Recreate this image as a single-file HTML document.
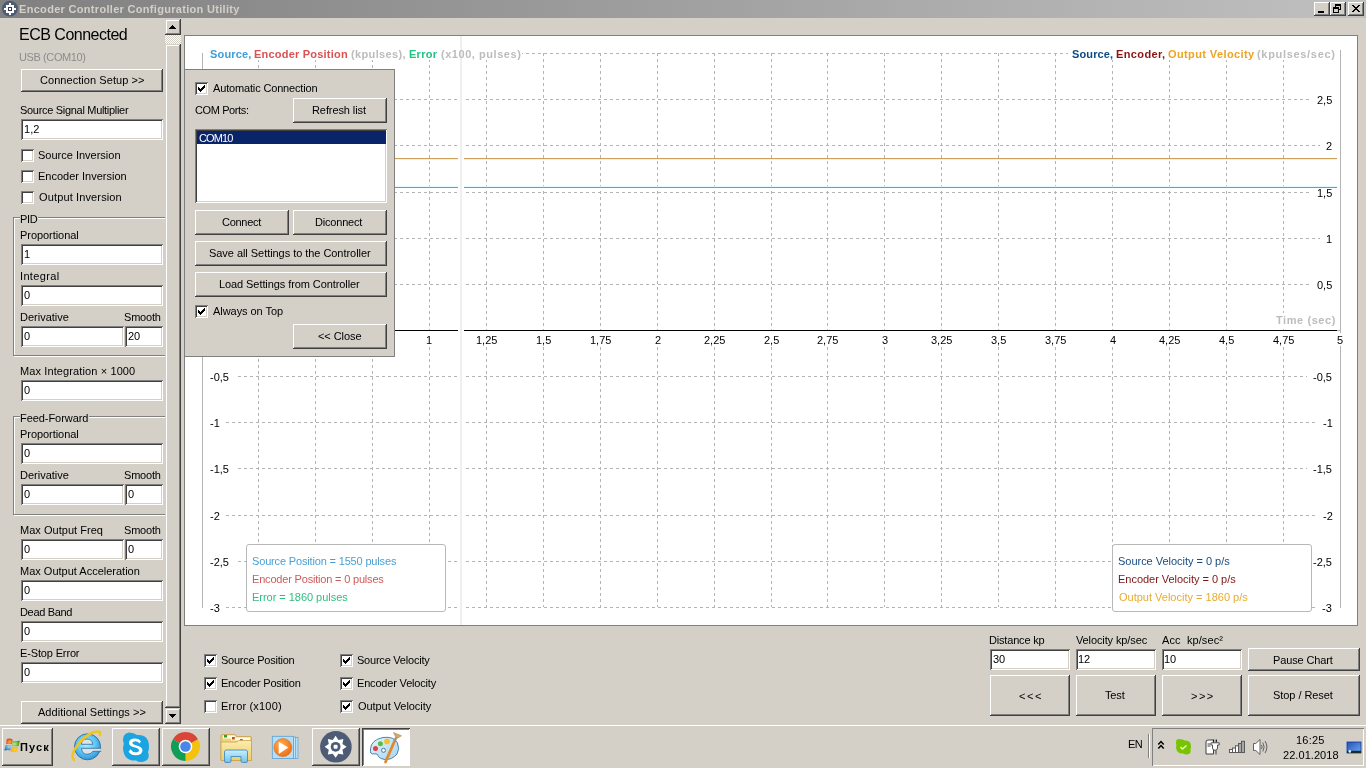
<!DOCTYPE html><html><head><meta charset="utf-8"><style>
html,body{margin:0;padding:0;}
body{width:1366px;height:768px;overflow:hidden;position:relative;background:#d4d0c8;font-family:'Liberation Sans', sans-serif;}
.t{position:absolute;white-space:pre;will-change:transform;}
.r{position:absolute;}
.btn{position:absolute;box-sizing:border-box;background:#d4d0c8;box-shadow:inset -1px -1px #404040, inset 1px 1px #fff, inset -2px -2px #808080;}
.sbtn{position:absolute;box-sizing:border-box;background:#d4d0c8;box-shadow:inset -1px -1px #404040, inset 1px 1px #d4d0c8, inset -2px -2px #808080, inset 2px 2px #fff;}
.tb{position:absolute;box-sizing:border-box;background:#fff;box-shadow:inset 1px 1px #808080, inset -1px -1px #fff, inset 2px 2px #404040, inset -2px -2px #d4d0c8;}
.cb{position:absolute;box-sizing:border-box;width:13px;height:13px;background:#fff;box-shadow:inset 1px 1px #808080, inset -1px -1px #fff, inset 2px 2px #404040, inset -2px -2px #d4d0c8;}
</style></head><body>
<div class="r" style="left:0;top:0;width:1366px;height:18px;background:linear-gradient(to right,#808080,#c0c0c0)"></div>
<svg class="t" style="left:0;top:0" width="19" height="18"><circle cx="9.9" cy="8.7" r="7.9" fill="#4d5b75"/><g shape-rendering="crispEdges" fill="#fff"><rect x="6" y="5" width="8" height="8"/><rect x="9" y="3" width="2" height="2"/><rect x="9" y="13" width="2" height="2"/><rect x="4" y="8" width="2" height="2"/><rect x="14" y="8" width="2" height="2"/></g><g shape-rendering="crispEdges"><rect x="8" y="7" width="4" height="4" fill="#333a48"/><rect x="9" y="8" width="2" height="2" fill="#fff"/></g></svg>
<div class="t" style="left:19.00px;top:3px;font-size:11px;line-height:13px;color:#d4d0c8;font-weight:bold;letter-spacing:0.308px;">Encoder Controller Configuration Utility</div>
<div class="btn" style="left:1314px;top:2px;width:16px;height:14px"></div>
<div class="btn" style="left:1330px;top:2px;width:16px;height:14px"></div>
<div class="btn" style="left:1348px;top:2px;width:16px;height:14px"></div>
<div class="r" style="left:1318px;top:11px;width:6px;height:2px;background:#000"></div>
<svg class="t" style="left:1330px;top:2px" width="16" height="14" shape-rendering="crispEdges"><path d="M5 2h6v2h-6zM10 4h1v4h-1zM9 7h1v1h-1zM5 4h1v1h-1zM3 5h6v2h-6zM3 7h1v4h-1zM8 7h1v4h-1zM3 10h6v1h-6z" fill="#000"/></svg>
<svg class="t" style="left:1348px;top:2px" width="16" height="14" shape-rendering="crispEdges"><path d="M4 3h2v1h1v1h2v-1h1v-1h2v1h-1v1h-1v1h-1v1h1v1h1v1h1v1h-2v-1h-1v-1h-2v1h-1v1h-2v-1h1v-1h1v-1h1v-1h-1v-1h-1v-1h-1z" fill="#000"/></svg>
<div class="t" style="left:19.00px;top:25px;font-size:16px;line-height:19px;color:#000;letter-spacing:-0.500px;">ECB Connected</div>
<div class="t" style="left:19.00px;top:51px;font-size:11px;line-height:13px;color:#8c8c8c;letter-spacing:-0.400px;">USB (COM10)</div>
<div class="btn" style="left:21px;top:69px;width:142px;height:23px"></div>
<div class="t" style="left:39.50px;top:74px;font-size:11px;line-height:13px;color:#000;letter-spacing:0.056px;">Connection Setup &gt;&gt;</div>
<div class="t" style="left:20.00px;top:104px;font-size:11px;line-height:13px;color:#000;letter-spacing:-0.304px;">Source Signal Multiplier</div>
<div class="tb" style="left:21px;top:119px;width:142px;height:21px"></div>
<div class="t" style="left:23.90px;top:123px;font-size:11px;line-height:13px;color:#000;letter-spacing:0.050px;">1,2</div>
<div class="cb" style="left:21px;top:149px"></div>
<div class="t" style="left:37.50px;top:149px;font-size:11px;line-height:13px;color:#000;">Source Inversion</div>
<div class="cb" style="left:21px;top:170px"></div>
<div class="t" style="left:37.50px;top:170px;font-size:11px;line-height:13px;color:#000;">Encoder Inversion</div>
<div class="cb" style="left:21px;top:191px"></div>
<div class="t" style="left:38.50px;top:191px;font-size:11px;line-height:13px;color:#000;letter-spacing:0.133px;">Output Inversion</div>
<div class="r" style="left:13px;top:217px;width:160px;height:139px;box-sizing:border-box;border:1px solid #808080;box-shadow:inset 1px 1px #fff, 1px 1px #fff"></div>
<div class="r" style="left:20px;top:217px;width:18px;height:2px;background:#d4d0c8"></div>
<div class="t" style="left:19.80px;top:213px;font-size:11px;line-height:13px;color:#000;letter-spacing:-0.350px;">PID</div>
<div class="t" style="left:20.00px;top:229px;font-size:11px;line-height:13px;color:#000;letter-spacing:-0.055px;">Proportional</div>
<div class="tb" style="left:21px;top:244px;width:142px;height:21px"></div>
<div class="t" style="left:23.50px;top:248px;font-size:11px;line-height:13px;color:#000;">1</div>
<div class="t" style="left:20.00px;top:270px;font-size:11px;line-height:13px;color:#000;letter-spacing:0.343px;">Integral</div>
<div class="tb" style="left:21px;top:285px;width:142px;height:21px"></div>
<div class="t" style="left:24.00px;top:289px;font-size:11px;line-height:13px;color:#000;">0</div>
<div class="t" style="left:20.00px;top:311px;font-size:11px;line-height:13px;color:#000;">Derivative</div>
<div class="t" style="left:124.00px;top:311px;font-size:11px;line-height:13px;color:#000;letter-spacing:-0.200px;">Smooth</div>
<div class="tb" style="left:21px;top:326px;width:103px;height:21px"></div>
<div class="t" style="left:24.00px;top:330px;font-size:11px;line-height:13px;color:#000;">0</div>
<div class="tb" style="left:125px;top:326px;width:38px;height:21px"></div>
<div class="t" style="left:128.00px;top:330px;font-size:11px;line-height:13px;color:#000;">20</div>
<div class="t" style="left:20.00px;top:365px;font-size:11px;line-height:13px;color:#000;letter-spacing:0.114px;">Max Integration × 1000</div>
<div class="tb" style="left:21px;top:380px;width:142px;height:21px"></div>
<div class="t" style="left:24.00px;top:384px;font-size:11px;line-height:13px;color:#000;">0</div>
<div class="r" style="left:13px;top:416px;width:160px;height:99px;box-sizing:border-box;border:1px solid #808080;box-shadow:inset 1px 1px #fff, 1px 1px #fff"></div>
<div class="r" style="left:20px;top:416px;width:69px;height:2px;background:#d4d0c8"></div>
<div class="t" style="left:20.00px;top:412px;font-size:11px;line-height:13px;color:#000;letter-spacing:-0.055px;">Feed-Forward</div>
<div class="t" style="left:20.00px;top:428px;font-size:11px;line-height:13px;color:#000;letter-spacing:-0.055px;">Proportional</div>
<div class="tb" style="left:21px;top:443px;width:142px;height:21px"></div>
<div class="t" style="left:24.00px;top:447px;font-size:11px;line-height:13px;color:#000;">0</div>
<div class="t" style="left:20.00px;top:469px;font-size:11px;line-height:13px;color:#000;">Derivative</div>
<div class="t" style="left:124.00px;top:469px;font-size:11px;line-height:13px;color:#000;letter-spacing:-0.200px;">Smooth</div>
<div class="tb" style="left:21px;top:484px;width:103px;height:21px"></div>
<div class="t" style="left:24.00px;top:488px;font-size:11px;line-height:13px;color:#000;">0</div>
<div class="tb" style="left:125px;top:484px;width:38px;height:21px"></div>
<div class="t" style="left:128.00px;top:488px;font-size:11px;line-height:13px;color:#000;">0</div>
<div class="t" style="left:20.00px;top:524px;font-size:11px;line-height:13px;color:#000;letter-spacing:0.029px;">Max Output Freq</div>
<div class="t" style="left:124.00px;top:524px;font-size:11px;line-height:13px;color:#000;letter-spacing:-0.200px;">Smooth</div>
<div class="tb" style="left:21px;top:539px;width:103px;height:21px"></div>
<div class="t" style="left:24.00px;top:543px;font-size:11px;line-height:13px;color:#000;">0</div>
<div class="tb" style="left:125px;top:539px;width:38px;height:21px"></div>
<div class="t" style="left:128.00px;top:543px;font-size:11px;line-height:13px;color:#000;">0</div>
<div class="t" style="left:20.00px;top:565px;font-size:11px;line-height:13px;color:#000;">Max Output Acceleration</div>
<div class="tb" style="left:21px;top:580px;width:142px;height:21px"></div>
<div class="t" style="left:24.00px;top:584px;font-size:11px;line-height:13px;color:#000;">0</div>
<div class="t" style="left:20.00px;top:606px;font-size:11px;line-height:13px;color:#000;letter-spacing:-0.325px;">Dead Band</div>
<div class="tb" style="left:21px;top:621px;width:142px;height:21px"></div>
<div class="t" style="left:24.00px;top:625px;font-size:11px;line-height:13px;color:#000;">0</div>
<div class="t" style="left:20.00px;top:647px;font-size:11px;line-height:13px;color:#000;letter-spacing:-0.145px;">E-Stop Error</div>
<div class="tb" style="left:21px;top:662px;width:142px;height:21px"></div>
<div class="t" style="left:24.00px;top:666px;font-size:11px;line-height:13px;color:#000;">0</div>
<div class="btn" style="left:21px;top:701px;width:142px;height:23px"></div>
<div class="t" style="left:37.50px;top:706px;font-size:11px;line-height:13px;color:#000;letter-spacing:0.038px;">Additional Settings &gt;&gt;</div>
<div class="r" style="left:165px;top:19px;width:16px;height:705px;background:repeating-conic-gradient(#fff 0 25%, #d4d0c8 0 50%) 0 0/2px 2px"></div>
<div class="sbtn" style="left:165px;top:19px;width:16px;height:16px"></div>
<svg class="t" style="left:165px;top:19px" width="16" height="16" shape-rendering="crispEdges"><path d="M7 6h1v1h1v1h1v1h1v1h-7v-1h1v-1h1v-1h1z" fill="#000"/></svg>
<div class="sbtn" style="left:165px;top:44px;width:16px;height:664px"></div>
<div class="sbtn" style="left:165px;top:708px;width:16px;height:16px"></div>
<svg class="t" style="left:165px;top:708px" width="16" height="16" shape-rendering="crispEdges"><path d="M4 6h7v1h-1v1h-1v1h-1v1h-1v-1h-1v-1h-1v-1h-1z" fill="#000"/></svg>
<div class="r" style="left:184px;top:35px;width:1174px;height:591px;box-sizing:border-box;border:1px solid #808080;background:#fff"></div>
<svg class="t" style="left:0;top:0" width="1366" height="768" shape-rendering="crispEdges"><line x1="258.5" y1="53" x2="258.5" y2="607" stroke="#b4b4b4" stroke-dasharray="3 3"/><line x1="315.5" y1="53" x2="315.5" y2="607" stroke="#b4b4b4" stroke-dasharray="3 3"/><line x1="372.5" y1="53" x2="372.5" y2="607" stroke="#b4b4b4" stroke-dasharray="3 3"/><line x1="429.5" y1="53" x2="429.5" y2="607" stroke="#b4b4b4" stroke-dasharray="3 3"/><line x1="486.5" y1="53" x2="486.5" y2="607" stroke="#b4b4b4" stroke-dasharray="3 3"/><line x1="543.5" y1="53" x2="543.5" y2="607" stroke="#b4b4b4" stroke-dasharray="3 3"/><line x1="600.5" y1="53" x2="600.5" y2="607" stroke="#b4b4b4" stroke-dasharray="3 3"/><line x1="657.5" y1="53" x2="657.5" y2="607" stroke="#b4b4b4" stroke-dasharray="3 3"/><line x1="714.5" y1="53" x2="714.5" y2="607" stroke="#b4b4b4" stroke-dasharray="3 3"/><line x1="771.5" y1="53" x2="771.5" y2="607" stroke="#b4b4b4" stroke-dasharray="3 3"/><line x1="827.5" y1="53" x2="827.5" y2="607" stroke="#b4b4b4" stroke-dasharray="3 3"/><line x1="884.5" y1="53" x2="884.5" y2="607" stroke="#b4b4b4" stroke-dasharray="3 3"/><line x1="941.5" y1="53" x2="941.5" y2="607" stroke="#b4b4b4" stroke-dasharray="3 3"/><line x1="998.5" y1="53" x2="998.5" y2="607" stroke="#b4b4b4" stroke-dasharray="3 3"/><line x1="1055.5" y1="53" x2="1055.5" y2="607" stroke="#b4b4b4" stroke-dasharray="3 3"/><line x1="1112.5" y1="53" x2="1112.5" y2="607" stroke="#b4b4b4" stroke-dasharray="3 3"/><line x1="1169.5" y1="53" x2="1169.5" y2="607" stroke="#b4b4b4" stroke-dasharray="3 3"/><line x1="1226.5" y1="53" x2="1226.5" y2="607" stroke="#b4b4b4" stroke-dasharray="3 3"/><line x1="1283.5" y1="53" x2="1283.5" y2="607" stroke="#b4b4b4" stroke-dasharray="3 3"/><line x1="202" y1="607.5" x2="1340" y2="607.5" stroke="#b4b4b4" stroke-dasharray="3 3"/><line x1="202" y1="561.5" x2="1340" y2="561.5" stroke="#b4b4b4" stroke-dasharray="3 3"/><line x1="202" y1="515.5" x2="1340" y2="515.5" stroke="#b4b4b4" stroke-dasharray="3 3"/><line x1="202" y1="468.5" x2="1340" y2="468.5" stroke="#b4b4b4" stroke-dasharray="3 3"/><line x1="202" y1="422.5" x2="1340" y2="422.5" stroke="#b4b4b4" stroke-dasharray="3 3"/><line x1="202" y1="376.5" x2="1340" y2="376.5" stroke="#b4b4b4" stroke-dasharray="3 3"/><line x1="202" y1="284.5" x2="1340" y2="284.5" stroke="#b4b4b4" stroke-dasharray="3 3"/><line x1="202" y1="238.5" x2="1340" y2="238.5" stroke="#b4b4b4" stroke-dasharray="3 3"/><line x1="202" y1="192.5" x2="1340" y2="192.5" stroke="#b4b4b4" stroke-dasharray="3 3"/><line x1="202" y1="145.5" x2="1340" y2="145.5" stroke="#b4b4b4" stroke-dasharray="3 3"/><line x1="202" y1="99.5" x2="1340" y2="99.5" stroke="#b4b4b4" stroke-dasharray="3 3"/><line x1="202" y1="53.5" x2="1340" y2="53.5" stroke="#b4b4b4" stroke-dasharray="3 3"/></svg>
<svg class="t" style="left:0;top:0" width="1366" height="768" shape-rendering="crispEdges"><rect x="203" y="93" width="28" height="13" fill="#fff"/><rect x="1311" y="93" width="28" height="13" fill="#fff"/><rect x="203" y="139" width="19" height="13" fill="#fff"/><rect x="1320" y="139" width="19" height="13" fill="#fff"/><rect x="203" y="186" width="28" height="13" fill="#fff"/><rect x="1311" y="186" width="28" height="13" fill="#fff"/><rect x="203" y="232" width="19" height="13" fill="#fff"/><rect x="1320" y="232" width="19" height="13" fill="#fff"/><rect x="203" y="278" width="28" height="13" fill="#fff"/><rect x="1311" y="278" width="28" height="13" fill="#fff"/><rect x="203" y="370" width="32" height="13" fill="#fff"/><rect x="1307" y="370" width="32" height="13" fill="#fff"/><rect x="203" y="416" width="23" height="13" fill="#fff"/><rect x="1316" y="416" width="23" height="13" fill="#fff"/><rect x="203" y="462" width="32" height="13" fill="#fff"/><rect x="1307" y="462" width="32" height="13" fill="#fff"/><rect x="203" y="509" width="23" height="13" fill="#fff"/><rect x="1316" y="509" width="23" height="13" fill="#fff"/><rect x="203" y="555" width="32" height="13" fill="#fff"/><rect x="1307" y="555" width="32" height="13" fill="#fff"/><rect x="203" y="601" width="23" height="13" fill="#fff"/><rect x="1316" y="601" width="23" height="13" fill="#fff"/><rect x="424" y="331" width="10" height="15" fill="#fff"/><rect x="473" y="331" width="26" height="15" fill="#fff"/><rect x="536" y="331" width="14" height="15" fill="#fff"/><rect x="587" y="331" width="26" height="15" fill="#fff"/><rect x="652" y="331" width="10" height="15" fill="#fff"/><rect x="701" y="331" width="26" height="15" fill="#fff"/><rect x="764" y="331" width="14" height="15" fill="#fff"/><rect x="814" y="331" width="26" height="15" fill="#fff"/><rect x="879" y="331" width="10" height="15" fill="#fff"/><rect x="928" y="331" width="26" height="15" fill="#fff"/><rect x="991" y="331" width="14" height="15" fill="#fff"/><rect x="1042" y="331" width="26" height="15" fill="#fff"/><rect x="1107" y="331" width="10" height="15" fill="#fff"/><rect x="1156" y="331" width="26" height="15" fill="#fff"/><rect x="1219" y="331" width="14" height="15" fill="#fff"/><rect x="1270" y="331" width="26" height="15" fill="#fff"/><rect x="1335" y="331" width="10" height="15" fill="#fff"/><rect x="203" y="47" width="319" height="13" fill="#fff"/><rect x="1068" y="47" width="271" height="13" fill="#fff"/><rect x="1270" y="313" width="69" height="13" fill="#fff"/></svg>
<svg class="t" style="left:0;top:0" width="1366" height="768" shape-rendering="crispEdges"><line x1="202.5" y1="53" x2="202.5" y2="608" stroke="#b4b4b4"/><line x1="1340.5" y1="50" x2="1340.5" y2="333" stroke="#b4b4b4"/><line x1="1340.5" y1="346" x2="1340.5" y2="608" stroke="#b4b4b4"/><line x1="202" y1="330.5" x2="1337" y2="330.5" stroke="#000"/><line x1="1337" y1="330.5" x2="1340" y2="330.5" stroke="#b4b4b4"/><rect x="202" y="158" width="1135" height="1" fill="#cfa058"/><rect x="202" y="159" width="1135" height="1" fill="#fff4b8"/><rect x="202" y="187" width="1135" height="1" fill="#6b9dbf"/><rect x="202" y="186" width="1135" height="1" fill="#e2f9ff"/><rect x="458" y="36" width="6" height="589" fill="#fff"/><rect x="460" y="36" width="2" height="589" fill="#efefef"/></svg>
<div class="t" style="left:210.00px;top:94px;font-size:11px;line-height:13px;color:#000;">2,5</div>
<div class="t" style="left:1317.00px;top:94px;font-size:11px;line-height:13px;color:#000;">2,5</div>
<div class="t" style="left:210.00px;top:140px;font-size:11px;line-height:13px;color:#000;">2</div>
<div class="t" style="left:1326.00px;top:140px;font-size:11px;line-height:13px;color:#000;">2</div>
<div class="t" style="left:209.00px;top:187px;font-size:11px;line-height:13px;color:#000;">1,5</div>
<div class="t" style="left:1317.00px;top:187px;font-size:11px;line-height:13px;color:#000;">1,5</div>
<div class="t" style="left:209.00px;top:233px;font-size:11px;line-height:13px;color:#000;">1</div>
<div class="t" style="left:1326.00px;top:233px;font-size:11px;line-height:13px;color:#000;">1</div>
<div class="t" style="left:210.00px;top:279px;font-size:11px;line-height:13px;color:#000;">0,5</div>
<div class="t" style="left:1317.00px;top:279px;font-size:11px;line-height:13px;color:#000;">0,5</div>
<div class="t" style="left:210.00px;top:371px;font-size:11px;line-height:13px;color:#000;">-0,5</div>
<div class="t" style="left:1313.00px;top:371px;font-size:11px;line-height:13px;color:#000;">-0,5</div>
<div class="t" style="left:210.00px;top:417px;font-size:11px;line-height:13px;color:#000;">-1</div>
<div class="t" style="left:1323.00px;top:417px;font-size:11px;line-height:13px;color:#000;">-1</div>
<div class="t" style="left:210.00px;top:463px;font-size:11px;line-height:13px;color:#000;">-1,5</div>
<div class="t" style="left:1313.00px;top:463px;font-size:11px;line-height:13px;color:#000;">-1,5</div>
<div class="t" style="left:210.00px;top:510px;font-size:11px;line-height:13px;color:#000;">-2</div>
<div class="t" style="left:1323.00px;top:510px;font-size:11px;line-height:13px;color:#000;">-2</div>
<div class="t" style="left:210.00px;top:556px;font-size:11px;line-height:13px;color:#000;">-2,5</div>
<div class="t" style="left:1313.00px;top:556px;font-size:11px;line-height:13px;color:#000;">-2,5</div>
<div class="t" style="left:210.00px;top:602px;font-size:11px;line-height:13px;color:#000;">-3</div>
<div class="t" style="left:1322.00px;top:602px;font-size:11px;line-height:13px;color:#000;">-3</div>
<div class="t" style="left:426.00px;top:334px;font-size:11px;line-height:13px;color:#000;">1</div>
<div class="t" style="left:475.50px;top:334px;font-size:11px;line-height:13px;color:#000;">1,25</div>
<div class="t" style="left:535.50px;top:334px;font-size:11px;line-height:13px;color:#000;">1,5</div>
<div class="t" style="left:589.50px;top:334px;font-size:11px;line-height:13px;color:#000;">1,75</div>
<div class="t" style="left:654.50px;top:334px;font-size:11px;line-height:13px;color:#000;">2</div>
<div class="t" style="left:704.00px;top:334px;font-size:11px;line-height:13px;color:#000;">2,25</div>
<div class="t" style="left:764.00px;top:334px;font-size:11px;line-height:13px;color:#000;">2,5</div>
<div class="t" style="left:817.00px;top:334px;font-size:11px;line-height:13px;color:#000;">2,75</div>
<div class="t" style="left:881.50px;top:334px;font-size:11px;line-height:13px;color:#000;">3</div>
<div class="t" style="left:931.00px;top:334px;font-size:11px;line-height:13px;color:#000;">3,25</div>
<div class="t" style="left:991.00px;top:334px;font-size:11px;line-height:13px;color:#000;">3,5</div>
<div class="t" style="left:1045.00px;top:334px;font-size:11px;line-height:13px;color:#000;">3,75</div>
<div class="t" style="left:1109.50px;top:334px;font-size:11px;line-height:13px;color:#000;">4</div>
<div class="t" style="left:1159.00px;top:334px;font-size:11px;line-height:13px;color:#000;">4,25</div>
<div class="t" style="left:1219.00px;top:334px;font-size:11px;line-height:13px;color:#000;">4,5</div>
<div class="t" style="left:1273.00px;top:334px;font-size:11px;line-height:13px;color:#000;">4,75</div>
<div class="t" style="left:1337.00px;top:334px;font-size:11px;line-height:13px;color:#000;">5</div>
<div class="t" style="left:210.00px;top:48px;font-size:11px;line-height:13px;color:#3d9fd9;font-weight:bold;letter-spacing:0.167px;">Source,</div>
<div class="t" style="left:253.80px;top:48px;font-size:11px;line-height:13px;color:#da5252;font-weight:bold;letter-spacing:0.213px;">Encoder Position</div>
<div class="t" style="left:351.00px;top:48px;font-size:11px;line-height:13px;color:#bcbcbc;font-weight:bold;letter-spacing:0.356px;">(kpulses),</div>
<div class="t" style="left:408.50px;top:48px;font-size:11px;line-height:13px;color:#23c184;font-weight:bold;letter-spacing:0.275px;">Error</div>
<div class="t" style="left:441.00px;top:48px;font-size:11px;line-height:13px;color:#bcbcbc;font-weight:bold;letter-spacing:0.546px;">(x100, pulses)</div>
<div class="t" style="left:1071.50px;top:48px;font-size:11px;line-height:13px;color:#0d4a88;font-weight:bold;letter-spacing:0.117px;">Source,</div>
<div class="t" style="left:1115.80px;top:48px;font-size:11px;line-height:13px;color:#8c1212;font-weight:bold;letter-spacing:0.371px;">Encoder,</div>
<div class="t" style="left:1167.50px;top:48px;font-size:11px;line-height:13px;color:#eca326;font-weight:bold;letter-spacing:0.393px;">Output Velocity</div>
<div class="t" style="left:1257.30px;top:48px;font-size:11px;line-height:13px;color:#bcbcbc;font-weight:bold;letter-spacing:0.683px;">(kpulses/sec)</div>
<div class="t" style="left:1276.10px;top:314px;font-size:11px;line-height:13px;color:#bcbcbc;font-weight:bold;letter-spacing:0.578px;">Time (sec)</div>
<div class="r" style="left:246px;top:544px;width:200px;height:68px;box-sizing:border-box;border:1px solid #b8b8b8;border-radius:3px;background:#fff"></div>
<div class="t" style="left:251.60px;top:555px;font-size:11px;line-height:13px;color:#4a9fd2;letter-spacing:-0.161px;">Source Position = 1550 pulses</div>
<div class="t" style="left:251.60px;top:573px;font-size:11px;line-height:13px;color:#cf5a5a;letter-spacing:-0.185px;">Encoder Position = 0 pulses</div>
<div class="t" style="left:251.60px;top:591px;font-size:11px;line-height:13px;color:#2dbf7e;letter-spacing:-0.033px;">Error = 1860 pulses</div>
<div class="r" style="left:1112px;top:544px;width:200px;height:68px;box-sizing:border-box;border:1px solid #b8b8b8;border-radius:3px;background:#fff"></div>
<div class="t" style="left:1117.80px;top:555px;font-size:11px;line-height:13px;color:#174b83;letter-spacing:-0.023px;">Source Velocity = 0 p/s</div>
<div class="t" style="left:1117.80px;top:573px;font-size:11px;line-height:13px;color:#7d1515;letter-spacing:-0.026px;">Encoder Velocity = 0 p/s</div>
<div class="t" style="left:1118.80px;top:591px;font-size:11px;line-height:13px;color:#e6ac2e;">Output Velocity = 1860 p/s</div>
<div class="r" style="left:184px;top:69px;width:211px;height:288px;box-sizing:border-box;border:1px solid #808080;background:#d4d0c8"></div>
<div class="cb" style="left:195px;top:82px"></div>
<svg class="t" style="left:195px;top:82px" width="13" height="13" shape-rendering="crispEdges"><path d="M3 5h1v3h-1zM4 6h1v3h-1zM5 7h1v3h-1zM6 6h1v3h-1zM7 5h1v3h-1zM8 4h1v3h-1zM9 3h1v3h-1z" fill="#000"/></svg>
<div class="t" style="left:213.10px;top:82px;font-size:11px;line-height:13px;color:#000;letter-spacing:-0.158px;">Automatic Connection</div>
<div class="t" style="left:195.10px;top:104px;font-size:11px;line-height:13px;color:#000;letter-spacing:-0.389px;">COM Ports:</div>
<div class="btn" style="left:293px;top:98px;width:94px;height:25px"></div>
<div class="t" style="left:311.70px;top:104px;font-size:11px;line-height:13px;color:#000;letter-spacing:-0.091px;">Refresh list</div>
<div class="tb" style="left:195px;top:129px;width:192px;height:74px"></div>
<div class="r" style="left:197px;top:131px;width:189px;height:13px;background:#0a246a"></div>
<div class="t" style="left:198.80px;top:132px;font-size:11px;line-height:13px;color:#fff;letter-spacing:-0.900px;">COM10</div>
<div class="btn" style="left:195px;top:210px;width:94px;height:25px"></div>
<div class="t" style="left:221.70px;top:216px;font-size:11px;line-height:13px;color:#000;letter-spacing:-0.283px;">Connect</div>
<div class="btn" style="left:293px;top:210px;width:94px;height:25px"></div>
<div class="t" style="left:314.50px;top:216px;font-size:11px;line-height:13px;color:#000;letter-spacing:-0.188px;">Diconnect</div>
<div class="btn" style="left:195px;top:241px;width:192px;height:25px"></div>
<div class="t" style="left:208.60px;top:247px;font-size:11px;line-height:13px;color:#000;letter-spacing:-0.047px;">Save all Settings to the Controller</div>
<div class="btn" style="left:195px;top:272px;width:192px;height:25px"></div>
<div class="t" style="left:219.30px;top:278px;font-size:11px;line-height:13px;color:#000;letter-spacing:-0.082px;">Load Settings from Controller</div>
<div class="cb" style="left:195px;top:305px"></div>
<svg class="t" style="left:195px;top:305px" width="13" height="13" shape-rendering="crispEdges"><path d="M3 5h1v3h-1zM4 6h1v3h-1zM5 7h1v3h-1zM6 6h1v3h-1zM7 5h1v3h-1zM8 4h1v3h-1zM9 3h1v3h-1z" fill="#000"/></svg>
<div class="t" style="left:212.80px;top:305px;font-size:11px;line-height:13px;color:#000;letter-spacing:-0.050px;">Always on Top</div>
<div class="btn" style="left:293px;top:324px;width:94px;height:25px"></div>
<div class="t" style="left:317.50px;top:330px;font-size:11px;line-height:13px;color:#000;letter-spacing:-0.057px;">&lt;&lt; Close</div>
<div class="cb" style="left:204px;top:654px"></div>
<svg class="t" style="left:204px;top:654px" width="13" height="13" shape-rendering="crispEdges"><path d="M3 5h1v3h-1zM4 6h1v3h-1zM5 7h1v3h-1zM6 6h1v3h-1zM7 5h1v3h-1zM8 4h1v3h-1zM9 3h1v3h-1z" fill="#000"/></svg>
<div class="t" style="left:220.60px;top:654px;font-size:11px;line-height:13px;color:#000;letter-spacing:-0.236px;">Source Position</div>
<div class="cb" style="left:204px;top:677px"></div>
<svg class="t" style="left:204px;top:677px" width="13" height="13" shape-rendering="crispEdges"><path d="M3 5h1v3h-1zM4 6h1v3h-1zM5 7h1v3h-1zM6 6h1v3h-1zM7 5h1v3h-1zM8 4h1v3h-1zM9 3h1v3h-1z" fill="#000"/></svg>
<div class="t" style="left:220.60px;top:677px;font-size:11px;line-height:13px;color:#000;letter-spacing:-0.220px;">Encoder Position</div>
<div class="cb" style="left:204px;top:700px"></div>
<div class="t" style="left:220.60px;top:700px;font-size:11px;line-height:13px;color:#000;letter-spacing:0.173px;">Error (x100)</div>
<div class="cb" style="left:340px;top:654px"></div>
<svg class="t" style="left:340px;top:654px" width="13" height="13" shape-rendering="crispEdges"><path d="M3 5h1v3h-1zM4 6h1v3h-1zM5 7h1v3h-1zM6 6h1v3h-1zM7 5h1v3h-1zM8 4h1v3h-1zM9 3h1v3h-1z" fill="#000"/></svg>
<div class="t" style="left:356.80px;top:654px;font-size:11px;line-height:13px;color:#000;letter-spacing:-0.221px;">Source Velocity</div>
<div class="cb" style="left:340px;top:677px"></div>
<svg class="t" style="left:340px;top:677px" width="13" height="13" shape-rendering="crispEdges"><path d="M3 5h1v3h-1zM4 6h1v3h-1zM5 7h1v3h-1zM6 6h1v3h-1zM7 5h1v3h-1zM8 4h1v3h-1zM9 3h1v3h-1z" fill="#000"/></svg>
<div class="t" style="left:356.80px;top:677px;font-size:11px;line-height:13px;color:#000;letter-spacing:-0.180px;">Encoder Velocity</div>
<div class="cb" style="left:340px;top:700px"></div>
<svg class="t" style="left:340px;top:700px" width="13" height="13" shape-rendering="crispEdges"><path d="M3 5h1v3h-1zM4 6h1v3h-1zM5 7h1v3h-1zM6 6h1v3h-1zM7 5h1v3h-1zM8 4h1v3h-1zM9 3h1v3h-1z" fill="#000"/></svg>
<div class="t" style="left:357.80px;top:700px;font-size:11px;line-height:13px;color:#000;letter-spacing:-0.057px;">Output Velocity</div>
<div class="t" style="left:988.80px;top:634px;font-size:11px;line-height:13px;color:#000;letter-spacing:-0.180px;">Distance kp</div>
<div class="t" style="left:1076.00px;top:634px;font-size:11px;line-height:13px;color:#000;letter-spacing:-0.114px;">Velocity kp/sec</div>
<div class="t" style="left:1162.00px;top:634px;font-size:11px;line-height:13px;color:#000;letter-spacing:0.091px;">Acc  kp/sec²</div>
<div class="tb" style="left:990px;top:649px;width:80px;height:21px"></div>
<div class="t" style="left:992.60px;top:653px;font-size:11px;line-height:13px;color:#000;">30</div>
<div class="btn" style="left:990px;top:675px;width:80px;height:41px"></div>
<div class="tb" style="left:1076px;top:649px;width:80px;height:21px"></div>
<div class="t" style="left:1077.60px;top:653px;font-size:11px;line-height:13px;color:#000;">12</div>
<div class="btn" style="left:1076px;top:675px;width:80px;height:41px"></div>
<div class="tb" style="left:1162px;top:649px;width:80px;height:21px"></div>
<div class="t" style="left:1163.60px;top:653px;font-size:11px;line-height:13px;color:#000;">10</div>
<div class="btn" style="left:1162px;top:675px;width:80px;height:41px"></div>
<div class="t" style="left:1018.90px;top:690px;font-size:11px;line-height:13px;color:#000;letter-spacing:1.600px;">&lt;&lt;&lt;</div>
<div class="t" style="left:1105.30px;top:689px;font-size:11px;line-height:13px;color:#000;letter-spacing:-0.133px;">Test</div>
<div class="t" style="left:1191.00px;top:690px;font-size:11px;line-height:13px;color:#000;letter-spacing:1.500px;">&gt;&gt;&gt;</div>
<div class="btn" style="left:1248px;top:648px;width:112px;height:23px"></div>
<div class="t" style="left:1272.50px;top:654px;font-size:11px;line-height:13px;color:#000;letter-spacing:-0.130px;">Pause Chart</div>
<div class="btn" style="left:1248px;top:675px;width:112px;height:41px"></div>
<div class="t" style="left:1272.50px;top:689px;font-size:11px;line-height:13px;color:#000;letter-spacing:-0.055px;">Stop / Reset</div>
<div class="r" style="left:0;top:724px;width:1366px;height:44px;background:#d4d0c8"></div>
<div class="r" style="left:0;top:725px;width:1366px;height:1px;background:#fff"></div>
<div class="btn" style="left:2px;top:728px;width:51px;height:38px"></div>
<svg class="t" style="left:2px;top:734px" width="20" height="22"><defs><radialGradient id="wr" cx="0.55" cy="0.6" r="0.6"><stop offset="0" stop-color="#ffb030"/><stop offset="1" stop-color="#d8401a"/></radialGradient><radialGradient id="wg" cx="0.3" cy="0.6" r="0.7"><stop offset="0" stop-color="#c8e890"/><stop offset="1" stop-color="#3a9a18"/></radialGradient><radialGradient id="wb" cx="0.7" cy="0.3" r="0.7"><stop offset="0" stop-color="#b0d8f0"/><stop offset="1" stop-color="#2a78c0"/></radialGradient><radialGradient id="wy" cx="0.6" cy="0.6" r="0.6"><stop offset="0" stop-color="#ffd020"/><stop offset="1" stop-color="#f0b030"/></radialGradient></defs><path d="M4.5 6Q5 4.5 7.5 4.6Q9.5 4.8 10.6 5.6L9.8 10.3Q8 9.5 5.8 9.8Q4.6 10 4.3 10.3Z" fill="url(#wr)"/><path d="M10.6 6.8Q13 7.8 15.5 7Q17 6.6 17.8 6.6L16.8 12Q14.5 12.5 12.5 12.3Q10.8 12 10 11.6Z" fill="url(#wg)"/><path d="M3.6 11.2Q5.5 10.8 7.5 11Q8.5 11.2 9.2 11.6L8.4 16.6Q6.5 15.8 4.5 16.2Q3 16.5 2.3 16.6Z" fill="url(#wb)"/><path d="M9.6 12.2Q11.5 13.2 13.5 13.2Q15 13.1 15.8 12.9L15.2 17.5Q13 18.3 11 18.2Q9.3 18 8.4 17.3Z" fill="url(#wy)"/></svg>
<div class="t" style="left:19.70px;top:741px;font-size:11px;line-height:13px;color:#000;font-weight:bold;letter-spacing:1.100px;">Пуск</div>
<svg class="t" style="left:68px;top:728px" width="38" height="38"><defs><radialGradient id="ie" cx="0.45" cy="0.4" r="0.65"><stop offset="0" stop-color="#b8f0ff"/><stop offset="0.55" stop-color="#5cc8f2"/><stop offset="1" stop-color="#2a8ad6"/></radialGradient></defs><circle cx="19.5" cy="18.8" r="13" fill="url(#ie)" stroke="#2a6aa8" stroke-width="0.9"/><path d="M13.4 16.3Q13.6 11 19 11Q24.5 11 24.8 16.3Z" fill="#dde2e6" stroke="#2a6aa0" stroke-width="0.8"/><path d="M13.4 20.3H33V23.3H25Q23 26.3 19 26.3Q14 26.3 13.4 20.3Z" fill="#dde2e6" stroke="#2a6aa0" stroke-width="0.8"/><path d="M33.2 20.6V23" stroke="#d4d0c8" stroke-width="1.6"/><path d="M6 32Q2 27 9 18Q17 7 26 4Q33 2 32 7" fill="none" stroke="#f4c41e" stroke-width="2.6" stroke-linecap="round"/></svg>
<div class="btn" style="left:112px;top:728px;width:48px;height:38px"></div>
<svg class="t" style="left:120px;top:731px" width="32" height="32"><path d="M9 1.5q5 0 8 2.5q12-1 12 12q0 3-1 5q3 9-7 10q-3 0-5-1.5q-12 1-13-12q0-2 .8-4.5q-3-10 5.2-11.5z" fill="#1aa5e2"/><path d="M21 10.5q-2-3-6-3q-6 0-6 4.5q0 3 6 4.5q4 1 4 2.7q0 2-3.5 2q-3 0-5-3l-2 2.5q2.5 3.5 7 3.5q7 0 7-5q0-3.5-6.5-5q-3.5-.8-3.5-2.2q0-1.8 3-1.8q2.5 0 4 2.2z" fill="#fff"/></svg>
<div class="btn" style="left:162px;top:728px;width:48px;height:38px"></div>
<svg class="t" style="left:170px;top:731px" width="31" height="31"><g transform="translate(15.5,15.5)"><path d="M0 0L-12.56 -7.25A14.5 14.5 0 0 1 12.56 -7.25Z" fill="#db4437"/><path d="M0 0L12.56 -7.25A14.5 14.5 0 0 1 0 14.5Z" fill="#f4c20d"/><path d="M0 0L0 14.5A14.5 14.5 0 0 1 -12.56 -7.25Z" fill="#0f9d58"/><circle r="6.8" fill="#fff"/><circle r="5.3" fill="#4a86e8"/></g></svg>
<svg class="t" style="left:216px;top:728px" width="40" height="38"><defs><linearGradient id="fo" x1="0" y1="0" x2="0" y2="1"><stop offset="0" stop-color="#fcecae"/><stop offset="1" stop-color="#efcd6c"/></linearGradient><linearGradient id="st" x1="0" y1="0" x2="0" y2="1"><stop offset="0" stop-color="#c8f0ff"/><stop offset="1" stop-color="#74c2ea"/></linearGradient></defs><path d="M5 8Q5 6.5 6.5 6.5H19L20.5 8.5H34Q35.5 8.5 35.5 10V32H5Z" fill="#f0d27a" stroke="#c9a24a" stroke-width="0.8"/><rect x="7" y="7.5" width="12" height="3" fill="#fffbe8"/><rect x="15" y="9.5" width="19" height="3" fill="#fffbe8"/><rect x="22" y="11" width="12" height="3" fill="#fffbe8"/><rect x="8" y="7" width="3" height="2.5" fill="#2aa02a"/><rect x="16" y="9" width="2.8" height="2.5" fill="#c0501a"/><rect x="24" y="11" width="2.8" height="2.5" fill="#3a8ab0"/><path d="M5 14H21L22.5 12.5H35.5V32.5H5Z" fill="url(#fo)" stroke="#c9a24a" stroke-width="0.8"/><path d="M8.5 24Q8.5 22 10.5 22H29.5Q31.5 22 31.5 24V33Q31.5 34.5 30 34.5H26.5Q25 34.5 25 33V28.5H15V33Q15 34.5 13.5 34.5H10Q8.5 34.5 8.5 33Z" fill="url(#st)" stroke="#3f8cbf" stroke-width="0.9"/></svg>
<svg class="t" style="left:266px;top:730px" width="36" height="36"><defs><radialGradient id="mo" cx="0.4" cy="0.35" r="0.7"><stop offset="0" stop-color="#ffb050"/><stop offset="1" stop-color="#ee6a10"/></radialGradient></defs><rect x="29.5" y="7.5" width="2.5" height="21" fill="#b8e2fa" stroke="#5aa0d0" stroke-width="0.7"/><rect x="27.5" y="7" width="2.2" height="21.6" fill="#c4e8fb" stroke="#5aa0d0" stroke-width="0.7"/><rect x="6.3" y="6.3" width="21.3" height="22.2" fill="#b6dcf6" stroke="#5aa0d0" stroke-width="0.8"/><circle cx="16.9" cy="17.6" r="9" fill="url(#mo)" stroke="#e0701a" stroke-width="0.6"/><path d="M12.7 11.7V23.9L22.3 17.6Z" fill="#fff"/></svg>
<div class="btn" style="left:312px;top:728px;width:48px;height:38px"></div>
<svg class="t" style="left:318px;top:729px" width="36" height="36"><circle cx="17.9" cy="17.8" r="15.8" fill="#4d5b75"/><polygon points="17.60,6.80 20.43,10.96 25.38,10.02 24.44,14.97 28.60,17.80 24.44,20.63 25.38,25.58 20.43,24.64 17.60,28.80 14.77,24.64 9.82,25.58 10.76,20.63 6.60,17.80 10.76,14.97 9.82,10.02 14.77,10.96" fill="#fff"/><circle cx="17.6" cy="17.8" r="4.9" fill="#4d5b75"/><rect x="15.6" y="15.8" width="4" height="4" rx="1" fill="#fff"/></svg>
<div class="r" style="left:362px;top:728px;width:48px;height:38px;box-sizing:border-box;background:#fff;box-shadow:inset 1px 1px #404040, inset -1px -1px #fff, inset 2px 2px #808080"></div>
<svg class="t" style="left:364px;top:729px" width="44" height="36"><defs><linearGradient id="pal" x1="0" y1="0" x2="1" y2="1"><stop offset="0" stop-color="#e4f4fc"/><stop offset="1" stop-color="#a8d4ee"/></linearGradient></defs><path d="M6.5 20Q7 11 19 8.5Q30 7 33.5 14Q36 20 33 25Q28 31 21 30.5Q16 30 14.5 27.5Q14 24.5 11 24.8Q8 25.5 6.8 24Q6.2 22.5 6.5 20Z" fill="url(#pal)" stroke="#3a78a8" stroke-width="0.9"/><circle cx="11.5" cy="19.5" r="2.5" fill="#e0404a"/><circle cx="16.4" cy="14.8" r="2.5" fill="#58c040"/><circle cx="23" cy="12.4" r="2.8" fill="#f2c030"/><circle cx="19.5" cy="21.3" r="2" fill="#fff" stroke="#2a5a80" stroke-width="0.8"/><path d="M21.5 33L31 11" stroke="#e08a30" stroke-width="2.8" stroke-linecap="round"/><path d="M30.5 12L32.2 8.5" stroke="#909090" stroke-width="2"/><path d="M29.5 3.5L37.5 6.8L32.5 9.8Z" fill="#d0a868" stroke="#b08850" stroke-width="0.6"/></svg>
<div class="t" style="left:1127.70px;top:738px;font-size:11px;line-height:13px;color:#000;letter-spacing:-0.500px;">EN</div>
<div class="r" style="left:1148px;top:734px;width:1px;height:24px;background:#808080;box-shadow:1px 0 #fff"></div>
<div class="r" style="left:1152px;top:728px;width:212px;height:38px;box-sizing:border-box;box-shadow:inset 1px 1px #808080, inset -1px -1px #fff"></div>
<svg class="t" style="left:1157px;top:740px" width="10" height="10"><path d="M1.3 4.6L4 1.6L6.7 4.6M1.3 8.6L4 5.6L6.7 8.6" fill="none" stroke="#000" stroke-width="1.5"/></svg>
<svg class="t" style="left:1175px;top:738px" width="17" height="17"><path d="M4 1q4 0 6 1.5q6-.5 6 6q0 2-.5 3q1 5-4 5q-2 0-3-1q-7 .5-7.5-6q0-1 .4-2.5q-1.5-6 2.6-6z" fill="#78c404"/><path d="M5.5 9l2 2 4-3.5" fill="none" stroke="#e8ffb0" stroke-width="1.5"/></svg>
<svg class="t" style="left:1200px;top:734px" width="75" height="26"><path d="M6 20V8Q6 6 8 6H13.5V20Z" fill="#fff" stroke="#404040" stroke-width="1"/><rect x="7.5" y="9" width="3" height="4" fill="#a0a0a0"/><path d="M13.5 5.5V8.5M16.3 5.5V8.5" stroke="#202020" stroke-width="1.3"/><path d="M11 8.8H19.2V11H17.5V14Q17.5 16.3 15 16.3Q12.5 16.3 12.5 14V11H11Z" fill="#fff" stroke="#404040" stroke-width="0.9"/><path d="M16 16.3V20.5" stroke="#404040" stroke-width="1"/><g stroke="#5a5a5a" stroke-width="1"><rect x="29.5" y="15.5" width="3" height="3" fill="#fff"/><rect x="32.5" y="14" width="3" height="4.5" fill="#fff"/><rect x="35.5" y="11.8" width="3" height="6.7" fill="#fff"/><rect x="38.5" y="9.5" width="3" height="9" fill="#a8a8a8"/><rect x="41.5" y="7.3" width="3" height="11.2" fill="#a8a8a8"/></g><path d="M53.5 9.5H55.8L60 5.5V20.5L55.8 16.5H53.5Z" fill="#fff" stroke="#606060" stroke-width="1"/><path d="M61.5 11Q62.8 13 61.5 15M62.8 8.5Q65.5 13 62.8 17.5M65 7Q68.8 13 65 19" fill="none" stroke="#606060" stroke-width="1"/></svg>
<div class="t" style="left:1296.40px;top:734px;font-size:11px;line-height:13px;color:#000;letter-spacing:0.200px;">16:25</div>
<div class="t" style="left:1282.80px;top:749px;font-size:11px;line-height:13px;color:#000;letter-spacing:0.056px;">22.01.2018</div>
<svg class="t" style="left:1346px;top:741px" width="16" height="13"><defs><linearGradient id="sd" x1="0" y1="0" x2="1" y2="1"><stop offset="0" stop-color="#2850b8"/><stop offset="1" stop-color="#68aaf4"/></linearGradient></defs><rect x="0" y="0" width="16" height="13" fill="#c4d8ee"/><rect x="1" y="1" width="14" height="11" fill="url(#sd)" stroke="#12308c" stroke-width="0.8"/><rect x="1" y="9.8" width="14" height="2.2" fill="#1e2a2a"/><circle cx="3.8" cy="10.4" r="1.3" fill="#d8f0ff"/></svg>
</body></html>
